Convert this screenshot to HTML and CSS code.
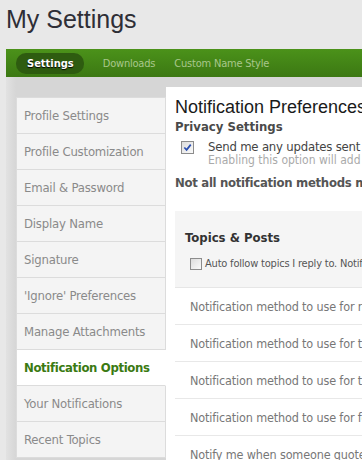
FILE: index.html
```html
<!DOCTYPE html>
<html lang="en">
<head>
  <meta charset="UTF-8" />
  <title>My Settings</title>
  <link rel="stylesheet" href="styles.css">
</head>
<body>
  <h1 class="page-title">My Settings</h1>

  <div class="tabs">
    <a class="tab active">Settings</a>
    <a class="tab">Downloads</a>
    <a class="tab">Custom Name Style</a>
  </div>

  <div class="main">
    <ul class="side-menu">
      <li>Profile Settings</li>
      <li>Profile Customization</li>
      <li>Email &amp; Password</li>
      <li>Display Name</li>
      <li>Signature</li>
      <li>'Ignore' Preferences</li>
      <li>Manage Attachments</li>
      <li class="current">Notification Options</li>
      <li>Your Notifications</li>
      <li>Recent Topics</li>
    </ul>

    <div class="content">
      <h2>Notification Preferences</h2>
      <h3>Privacy Settings</h3>
      <div class="option">
        <span class="cbox checked">
          <svg viewBox="0 0 10 10" width="9" height="9"><path d="M1.5 5 L4 7.6 L8.6 1.8" fill="none" stroke="#2b4fb0" stroke-width="1.9"/></svg>
        </span>
        <div>
          <div class="option-label">Send me any updates sent by the forum administrators</div>
          <div class="option-desc">Enabling this option will add you to the mailing list</div>
        </div>
      </div>
      <p class="warning">Not all notification methods may be available</p>

      <div class="group">
        <h4>Topics &amp; Posts</h4>
        <label class="small-option"><span class="cbox small"></span>Auto follow topics I reply to. Notify me of replies</label>
      </div>
      <div class="row">Notification method to use for replies</div>
      <div class="row">Notification method to use for topics</div>
      <div class="row">Notification method to use for tagged posts</div>
      <div class="row">Notification method to use for followed</div>
      <div class="row">Notify me when someone quotes my post</div>
    </div>
  </div>
</body>
</html>
```

FILE: styles.css
```css
body {
  margin: 0;
  background: #e8e8e8;
  font-family: 'DejaVu Sans Condensed', 'DejaVu Sans', sans-serif;
  overflow: hidden;
  height: 460px;
}
.page-title {
  margin: 0;
  padding: 5px 6px 0;
  height: 44px;
  font-family: 'Liberation Sans', Arial, sans-serif;
  font-weight: normal;
  font-size: 25px;
  color: #2e2e36;
}
.tabs {
  margin-left: 6px;
  height: 28px;
  background: linear-gradient(#4b921a, #3c7813);
  display: flex;
  align-items: center;
  padding-left: 10px;
  gap: 19px;
}
.tab {
  font-size: 11px;
  letter-spacing: -0.2px;
  color: #a9c78c;
}
.tab.active {
  padding: 4px 10px 4px 11px;
  border-radius: 10px;
  background: #2e5c10;
  color: #fff;
  font-weight: bold;
  letter-spacing: 0;
  text-shadow: 0 1px 1px #000;
}
.main {
  margin-left: 6px;
  background: linear-gradient(90deg, #e2e2e2, #d6d6d6 10px);
  display: flex;
  align-items: flex-start;
  padding-top: 10px;
  height: 400px;
}
.side-menu {
  list-style: none;
  margin: 10px 0 0 10px;
  padding: 0;
  width: 149px;
  border: 1px solid #dcdcdc;
  border-right: none;
}
.side-menu li {
  height: 35px;
  line-height: 35px;
  padding-left: 7px;
  font-size: 13px;
  letter-spacing: -0.2px;
  color: #8a8a8a;
  background: #f4f4f4;
  border-bottom: 1px solid #dcdcdc;
  border-right: 1px solid #dcdcdc;
}
.side-menu li:last-child {
  border-bottom: none;
}
.side-menu li.current {
  background: #fff;
  color: #3b7a12;
  font-weight: bold;
  letter-spacing: -0.35px;
  border-right-color: #fff;
}
.content {
  flex: 1;
  background: #fff;
  height: 390px;
  padding: 10px 0 0 9px;
  white-space: nowrap;
  overflow: hidden;
}
.content h2 {
  margin: 0;
  font-family: 'Liberation Sans', Arial, sans-serif;
  font-weight: normal;
  font-size: 18px;
  color: #1a1a1a;
}
.content h3 {
  margin: 1px 0 0;
  font-size: 13px;
  color: #4a4a4a;
}
.option {
  display: flex;
  gap: 14px;
  margin: 6px 0 0 6px;
}
.cbox {
  flex-shrink: 0;
  display: inline-flex;
  align-items: center;
  justify-content: center;
  width: 11px;
  height: 11px;
  margin-top: 1px;
  border: 1px solid #8c8c8c;
  background: linear-gradient(135deg, #dcdcdc, #fafafa);
}
.option-label {
  font-size: 13px;
  letter-spacing: -0.2px;
  color: #444;
  line-height: 14px;
}
.option-desc {
  font-size: 12px;
  color: #aaa;
  line-height: 13px;
}
.warning {
  margin: 8px 0 0;
  font-size: 13px;
  font-weight: bold;
  letter-spacing: -0.3px;
  color: #555;
}
.group {
  margin-top: 21px;
  background: #f5f5f5;
  border-bottom: 1px solid #e6e6e6;
  padding: 19px 0 16px 10px;
  height: 41px;
}
.group h4 {
  margin: 0;
  font-size: 13px;
  color: #333;
}
.small-option {
  display: flex;
  align-items: center;
  gap: 3px;
  margin: 12px 0 0 5px;
  font-size: 11px;
  letter-spacing: -0.2px;
  color: #555;
}
.cbox.small {
  width: 10px;
  height: 10px;
  margin-top: 0;
}
.row {
  height: 36px;
  line-height: 38px;
  padding-left: 15px;
  border-bottom: 1px solid #e8e8e8;
  font-size: 12.5px;
  letter-spacing: -0.15px;
  color: #777;
}
```
